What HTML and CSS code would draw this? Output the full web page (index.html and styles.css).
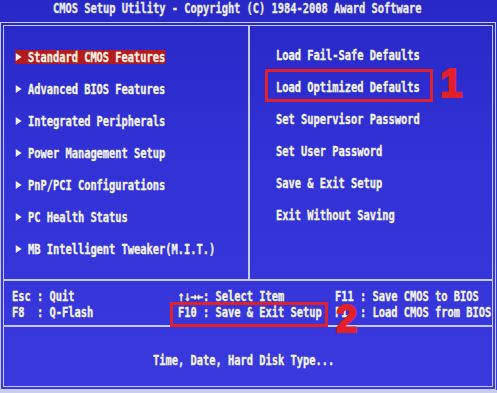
FILE: index.html
```html
<!DOCTYPE html>
<html>
<head>
<meta charset="utf-8">
<link rel="stylesheet" href="styles.css">
</head>
<body>
<div class="screen">
  <div class="title"><span class="cond pre">CMOS Setup Utility - Copyright (C) 1984-2008 Award Software</span></div>
  <div class="frame">
    <div class="top">
      <div class="col left">
        <ul class="menu cond">
          <li class="item"><span class="lbl sel"><span class="arrow"></span>Standard CMOS Features</span></li>
          <li class="item"><span class="lbl"><span class="arrow"></span>Advanced BIOS Features</span></li>
          <li class="item"><span class="lbl"><span class="arrow"></span>Integrated Peripherals</span></li>
          <li class="item"><span class="lbl"><span class="arrow"></span>Power Management Setup</span></li>
          <li class="item"><span class="lbl"><span class="arrow"></span>PnP/PCI Configurations</span></li>
          <li class="item"><span class="lbl"><span class="arrow"></span>PC Health Status</span></li>
          <li class="item"><span class="lbl"><span class="arrow"></span>MB Intelligent Tweaker(M.I.T.)</span></li>
        </ul>
      </div>
      <div class="col right">
        <ul class="menu cond">
          <li class="item"><span class="lbl">Load Fail-Safe Defaults</span></li>
          <li class="item"><span class="lbl">Load Optimized Defaults</span></li>
          <li class="item"><span class="lbl">Set Supervisor Password</span></li>
          <li class="item"><span class="lbl">Set User Password</span></li>
          <li class="item"><span class="lbl">Save &amp; Exit Setup</span></li>
          <li class="item"><span class="lbl">Exit Without Saving</span></li>
        </ul>
      </div>
    </div>
    <div class="keys">
      <div class="kcol"><div class="cond pre">Esc : Quit</div><div class="cond pre">F8  : Q-Flash</div></div>
      <div class="kcol"><div class="cond pre">↑↓→←: Select Item</div><div class="cond pre">F10 : Save &amp; Exit Setup</div></div>
      <div class="kcol"><div class="cond pre">F11 : Save CMOS to BIOS</div><div class="cond pre">F12 : Load CMOS from BIOS</div></div>
    </div>
    <div class="help"><span class="cond pre">Time, Date, Hard Disk Type...</span></div>
  </div>
  <div class="mark mark1"></div>
  <div class="num num1">1</div>
  <div class="mark mark2"></div>
  <div class="num num2">2</div>
</div>
</body>
</html>
```
FILE: styles.css
```css
html, body {
  margin: 0;
  padding: 0;
  background: #c8cced;
}
.screen {
  position: relative;
  width: 497px;
  height: 390px;
  overflow: hidden;
  background: linear-gradient(180deg, #2828c6 0%, #3131d6 40%, #3939de 100%);
  color: #f4f4f4;
  font-family: "DejaVu Sans Mono", monospace;
  font-weight: bold;
  font-size: 14px;
  -webkit-text-stroke: 0.35px currentColor;
}
.cond {
  display: inline-block;
  transform: scaleX(0.741);
  transform-origin: 0 50%;
}
.pre {
  white-space: pre;
}
.title {
  height: 22px;
  line-height: 16px;
  padding-left: 53px;
  box-sizing: border-box;
  color: #ececf8;
}
.frame {
  width: 496px;
  height: 368px;
  box-sizing: border-box;
  border: 4px double #c4c8f2;
  display: flex;
  flex-direction: column;
}
.top {
  height: 253px;
  flex: none;
  display: grid;
  grid-template-columns: 246px 1fr;
  border-bottom: 2px solid #c4c8f2;
}
.col.left {
  border-right: 2px solid #c4c8f2;
  padding: 15px 0 0 11px;
}
.col.right {
  padding: 13px 0 0 26px;
}
.menu {
  list-style: none;
  margin: 0;
  padding: 0;
  display: block;
  white-space: nowrap;
}
.item {
  height: 32px;
  display: flex;
  align-items: center;
}
.lbl {
  display: inline-flex;
  align-items: center;
  height: 14px;
  line-height: 14px;
}
.left .lbl {
  padding: 0 0 0 1.35px;
}
.lbl.sel {
  background: #b51a1c;
  color: #fbf3e6;
}
.arrow {
  width: 0;
  height: 0;
  border-left: 8px solid #f2f2f2;
  border-top: 4px solid transparent;
  border-bottom: 4px solid transparent;
  margin-right: 8.1px;
}
.keys {
  height: 46px;
  flex: none;
  box-sizing: border-box;
  padding: 7px 0 0 8px;
  display: grid;
  grid-template-columns: 166px 157px 1fr;
  border-bottom: 2px solid #c4c8f2;
  line-height: 16px;
}
.kcol {
  display: flex;
  flex-direction: column;
}
.kcol .cond {
  display: block;
}
.help {
  flex: 1;
  padding: 25px 0 0 149px;
  line-height: 16px;
}
.mark {
  position: absolute;
  border: 3px solid #e2202a;
  box-sizing: border-box;
}
.mark1 {
  left: 265px;
  top: 69px;
  width: 168px;
  height: 33px;
}
.mark2 {
  left: 170px;
  top: 302px;
  width: 158px;
  height: 25px;
}
.num {
  position: absolute;
  font-family: "Liberation Sans", Arial, sans-serif;
  font-weight: bold;
  color: #e2202a;
  -webkit-text-stroke: 2px #e2202a;
}
.num1 {
  left: 440px;
  top: 63px;
  font-size: 40px;
  line-height: 40px;
}
.num2 {
  left: 336px;
  top: 300px;
  font-size: 38px;
  line-height: 38px;
}
```
